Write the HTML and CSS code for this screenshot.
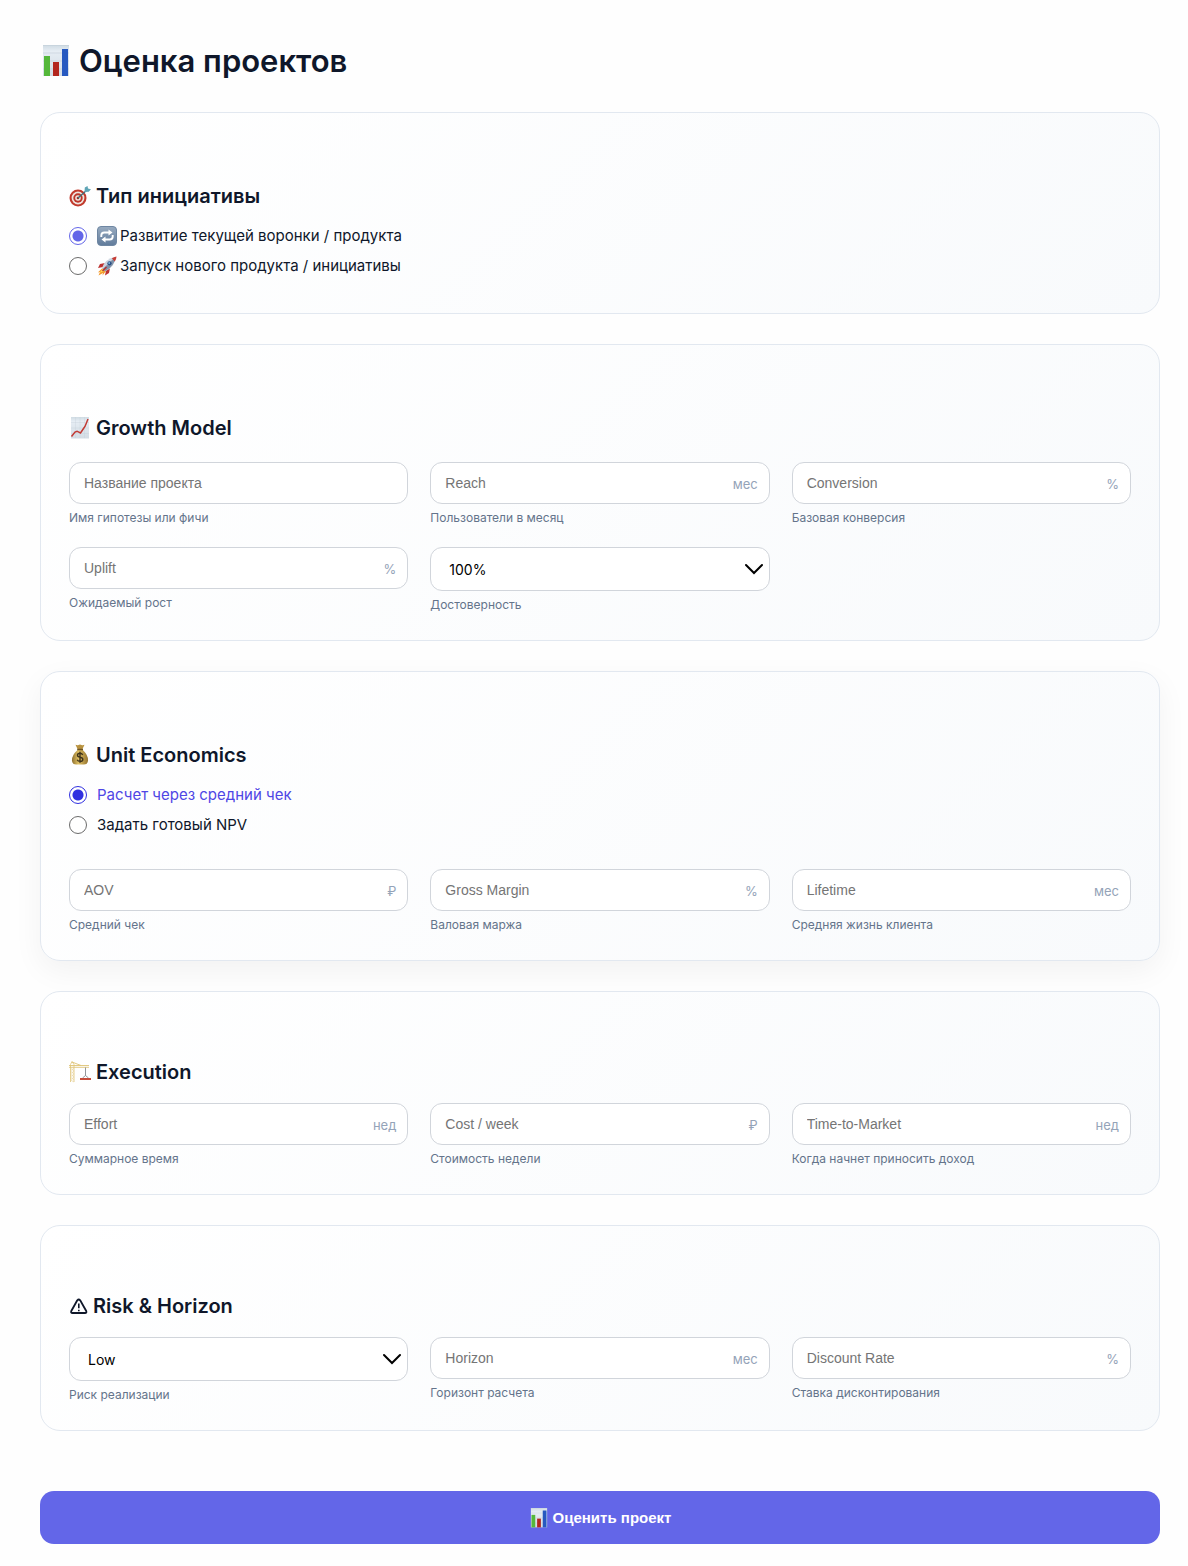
FILE: index.html
```html
<!DOCTYPE html>
<html lang="ru">
<head>
    <meta charset="UTF-8">
    <meta name="viewport" content="width=device-width, initial-scale=1.0">
    <title>Оценка проектов</title>
    <link rel="stylesheet" href="styles.css">
</head>
<body>
    <!-- общие иконки -->
    <svg class="sprite" aria-hidden="true">
        <defs>
            <linearGradient id="paper" x1="0" y1="0" x2="0" y2="1">
                <stop offset="0" stop-color="#cfdbe3"/>
                <stop offset="0.2" stop-color="#e6edf4"/>
                <stop offset="1" stop-color="#d3dce4"/>
            </linearGradient>
            <linearGradient id="key" x1="0" y1="0" x2="0" y2="1">
                <stop offset="0" stop-color="#98abc0"/>
                <stop offset="1" stop-color="#607b9b"/>
            </linearGradient>
            <linearGradient id="gold" x1="0" y1="0" x2="1" y2="0">
                <stop offset="0" stop-color="#8f7130"/>
                <stop offset="0.4" stop-color="#dfc063"/>
                <stop offset="1" stop-color="#95742f"/>
            </linearGradient>
        </defs>
        <symbol id="icon-chart" viewBox="0 0 32 32">
            <rect x="3" y="0" width="26" height="31" fill="url(#paper)"/>
            <path d="M3 .5h26M3 8h26M3 16h26M3 24h26" stroke="#c3ced8" stroke-width=".6"/>
            <rect x="4" y="11" width="6" height="20" fill="#55b83b"/>
            <rect x="13" y="17" width="6" height="14" fill="#b3261e"/>
            <rect x="22" y="4" width="6" height="27" fill="#2759c0"/>
        </symbol>
    </svg>

    <main class="container">
        <h1><svg class="icon-title" aria-hidden="true"><use href="#icon-chart"/></svg>Оценка проектов</h1>

        <form>
            <section class="card">
                <h2>
                    <svg class="icon" viewBox="0 0 22 22" aria-hidden="true">
                        <circle cx="9" cy="13" r="8.500" fill="#c13a2c"/>
                        <circle cx="9" cy="13" r="6.400" fill="#eee5df"/>
                        <circle cx="9" cy="13" r="4.700" fill="#bd3629"/>
                        <circle cx="9" cy="13" r="2.800" fill="#eee5df"/>
                        <circle cx="9" cy="13" r="1.300" fill="#a62d22"/>
                        <path d="M9 13 18 5" stroke="#3e6f7b" stroke-width="1.300"/>
                        <path d="m15.500 7 .3-4.500L18.500 1l.5 2.500 3 .7-2.300 2.600z" fill="#5fa5b6"/>
                    </svg>
                    Тип инициативы
                </h2>
                <div class="radio-group">
                    <label>
                        <input type="radio" name="type" checked>
                        <svg class="icon-small" viewBox="0 0 20 20" aria-hidden="true">
                            <rect x=".5" y=".5" width="19" height="19" rx="3.500" fill="url(#key)" stroke="#6e86a2"/>
                            <path d="M4.300 11V9.500Q4.300 6.500 7.300 6.500H12M15.700 9v1.500q0 3-3 3H8" fill="none" stroke="#fff" stroke-width="1.900"/>
                            <path d="m11.500 3.500 4 3-4 3zM8.500 10.500l-4 3 4 3z" fill="#fff"/>
                        </svg>
                        <span>Развитие текущей воронки / продукта</span>
                    </label>
                    <label>
                        <input type="radio" name="type">
                        <svg class="icon-small" viewBox="0 0 20 20" aria-hidden="true">
                            <path d="M5.500 12 .8 16.500 3 16l-1.500 3.500L6 17l-.5 2.500L9 15z" fill="#f49a2d"/>
                            <path d="m5.500 13-2.800 3.800L7.500 15z" fill="#fbdc58"/>
                            <path d="M8 7 3 8 1 12l5-1zM13 12l-1 5-4 2.500 1-5z" fill="#bd3230"/>
                            <path d="M5 12Q8 3 18.500.8q0 9.700-10.300 14.500z" fill="#cbd4df"/>
                            <path d="M8 15.300Q18 10 18.500.8L5.800 13z" fill="#7f91a8"/>
                            <path d="M14.800 2.200Q17 1 19.500.5q0 2.500-1.700 5z" fill="#c83d35"/>
                            <circle cx="12.500" cy="7.300" r="2.100" fill="#294f83"/>
                            <circle cx="12.200" cy="7" r="1" fill="#78b3dc"/>
                            <path d="m9.500 11-4 4" stroke="#b52f2e" stroke-width="1.500"/>
                        </svg>
                        <span>Запуск нового продукта / инициативы</span>
                    </label>
                </div>
            </section>

            <section class="card">
                <h2>
                    <svg class="icon" viewBox="0 0 22 22" aria-hidden="true">
                        <rect x="2" y="0" width="18" height="21.500" fill="url(#paper)"/>
                        <path d="M2 5.500h18M2 11h18M2 16.500h18M6.500 0v21M11 0v21M15.500 0v21" stroke="#c2ccd5" stroke-width=".3"/>
                        <path d="m2.500 19.500 3.500-4.500 2-.8 3.500 1.800 3-4.500 1.500-2 3-7.500" fill="none" stroke="#c23a34" stroke-width="1.500"/>
                    </svg>
                    Growth Model
                </h2>
                <div class="fields">
                    <div class="field">
                        <input type="text" id="name" placeholder="Название проекта">
                        <label for="name">Имя гипотезы или фичи</label>
                    </div>
                    <div class="field">
                        <input type="text" id="reach" placeholder="Reach">
                        <span class="unit">мес</span>
                        <label for="reach">Пользователи в месяц</label>
                    </div>
                    <div class="field">
                        <input type="text" id="conversion" placeholder="Conversion">
                        <span class="unit">%</span>
                        <label for="conversion">Базовая конверсия</label>
                    </div>
                    <div class="field">
                        <input type="text" id="uplift" placeholder="Uplift">
                        <span class="unit">%</span>
                        <label for="uplift">Ожидаемый рост</label>
                    </div>
                    <div class="field">
                        <select id="confidence">
                            <option>100%</option>
                            <option>80%</option>
                            <option>50%</option>
                        </select>
                        <svg class="arrow" viewBox="0 0 18 12" aria-hidden="true"><path d="m1 2 8 8 8-8"/></svg>
                        <label for="confidence">Достоверность</label>
                    </div>
                </div>
            </section>

            <section class="card active">
                <h2>
                    <svg class="icon" viewBox="0 0 22 22" aria-hidden="true">
                        <path d="M6.500.8q2 .8 3 .2 1.500-.8 3 0 1.500.5 3-.2L13.500 5h-5z" fill="#b8923f"/>
                        <path d="M8.500 6h5.300q5.700 5.500 5.200 11-.5 3.500-4 3.500H7q-3.500 0-4-3.500Q2.500 11.500 8.500 6z" fill="url(#gold)"/>
                        <path d="M8.200 5.500h5.800" stroke="#705423" stroke-width="1.500"/>
                        <path d="M13.700 10.800q-.8-1.500-2.700-1.500-2.500 0-2.500 2 0 1.500 2.600 2 2.700.5 2.700 2.100 0 2-2.700 2-2.200 0-2.900-1.700M11 7.800v11" fill="none" stroke="#3d321a" stroke-width="1.400"/>
                    </svg>
                    Unit Economics
                </h2>
                <div class="radio-group">
                    <label class="hovered">
                        <input type="radio" name="economics" checked>
                        <span>Расчет через средний чек</span>
                    </label>
                    <label>
                        <input type="radio" name="economics">
                        <span>Задать готовый NPV</span>
                    </label>
                </div>
                <div class="fields">
                    <div class="field">
                        <input type="text" id="aov" placeholder="AOV">
                        <span class="unit">₽</span>
                        <label for="aov">Средний чек</label>
                    </div>
                    <div class="field">
                        <input type="text" id="margin" placeholder="Gross Margin">
                        <span class="unit">%</span>
                        <label for="margin">Валовая маржа</label>
                    </div>
                    <div class="field">
                        <input type="text" id="lifetime" placeholder="Lifetime">
                        <span class="unit">мес</span>
                        <label for="lifetime">Средняя жизнь клиента</label>
                    </div>
                </div>
            </section>

            <section class="card compact">
                <h2>
                    <svg class="icon" viewBox="0 0 22 22" aria-hidden="true">
                        <path d="M1.500 21V3.500L3 .5l2 3V21" fill="none" stroke="#e6cf91"/>
                        <path d="m1.500 7 3.500 3-3.500 3L5 16l-3.500 3L5 21M5 7l-3.500 3L5 13l-3.500 3L5 19" fill="none" stroke="#ead7a2" stroke-width=".7"/>
                        <path d="M0 4.500h20M0 6.300h20M3 1l9 3.500" fill="none" stroke="#dfc477" stroke-width=".9"/>
                        <path d="M16.500 6.500v8m0 0-3 2.500m3-2.500 3 2.500" fill="none" stroke="#777c82" stroke-width=".8"/>
                        <path d="M11 17h11v2H11z" fill="#c64d3b"/>
                    </svg>
                    Execution
                </h2>
                <div class="fields">
                    <div class="field">
                        <input type="text" id="effort" placeholder="Effort">
                        <span class="unit">нед</span>
                        <label for="effort">Суммарное время</label>
                    </div>
                    <div class="field">
                        <input type="text" id="cost" placeholder="Cost / week">
                        <span class="unit">₽</span>
                        <label for="cost">Стоимость недели</label>
                    </div>
                    <div class="field">
                        <input type="text" id="ttm" placeholder="Time-to-Market">
                        <span class="unit">нед</span>
                        <label for="ttm">Когда начнет приносить доход</label>
                    </div>
                </div>
            </section>

            <section class="card compact">
                <h2>
                    <svg class="icon icon-warning" viewBox="0 0 19 22" aria-hidden="true">
                        <path d="M8.300 5.300 2.300 16q-.8 2 1.200 2h12.500q2 0 1.200-2l-6-10.700q-1.500-1.600-2.900 0z" fill="none" stroke="#0f172a" stroke-width="1.800"/>
                        <path d="M9.800 8.500v4.700m0 1.500v1.600" stroke="#0f172a" stroke-width="1.600"/>
                    </svg>
                    Risk &amp; Horizon
                </h2>
                <div class="fields">
                    <div class="field">
                        <select id="risk">
                            <option>Low</option>
                            <option>Medium</option>
                            <option>High</option>
                        </select>
                        <svg class="arrow" viewBox="0 0 18 12" aria-hidden="true"><path d="m1 2 8 8 8-8"/></svg>
                        <label for="risk">Риск реализации</label>
                    </div>
                    <div class="field">
                        <input type="text" id="horizon" placeholder="Horizon">
                        <span class="unit">мес</span>
                        <label for="horizon">Горизонт расчета</label>
                    </div>
                    <div class="field">
                        <input type="text" id="rate" placeholder="Discount Rate">
                        <span class="unit">%</span>
                        <label for="rate">Ставка дисконтирования</label>
                    </div>
                </div>
            </section>

            <button type="button"><svg class="icon-button" aria-hidden="true"><use href="#icon-chart"/></svg>Оценить проект</button>
        </form>
    </main>
</body>
</html>
```
FILE: styles.css
```css
* {
    box-sizing: border-box;
}
body {
    margin: 0;
    background: #fefefe;
    color: #0f172a;
    font-family: Inter, "Liberation Sans", sans-serif;
}
.sprite {
    position: absolute;
    width: 0;
    height: 0;
}
.container {
    padding: 40px 28px 22px 40px;
}
h1 {
    display: flex;
    align-items: center;
    gap: 7px;
    margin: 0 0 30px;
    font-size: 31px;
    font-weight: 600;
    line-height: 42px;
}
.icon-title {
    width: 32px;
    height: 32px;
}
form {
    display: flex;
    flex-direction: column;
    gap: 30px;
}
.card {
    padding: 68px 28px 28px;
    border: 1px solid #e2e8f0;
    border-radius: 20px;
    background: linear-gradient(135deg, #ffffff, #f8fafc);
}
.card.active {
    box-shadow: 0 10px 30px rgba(0, 0, 0, 0.05);
}
h2 {
    display: flex;
    align-items: center;
    gap: 5px;
    margin: 0 0 14px;
    font-size: 20px;
    font-weight: 600;
    line-height: 30px;
}
.compact h2 {
    line-height: 24px;
}
.icon {
    width: 22px;
    height: 22px;
}
.icon-warning {
    width: 19px;
}
.radio-group label {
    display: flex;
    align-items: center;
    width: fit-content;
    margin-bottom: 8px;
    font-size: 15px;
    line-height: 22px;
    cursor: pointer;
}
.radio-group .hovered {
    color: #4f46e5;
}
.icon-small {
    width: 20px;
    height: 20px;
    margin-right: 3px;
}
input[type="radio"] {
    appearance: none;
    width: 18px;
    height: 18px;
    margin: 0 10px 0 0;
    border: 1px solid #6b6b6b;
    border-radius: 50%;
    background: #fff;
}
input[type="radio"]:checked {
    border-color: #6366e8;
    background: radial-gradient(circle, #6366e8 5px, #fff 6px);
}
.hovered input[type="radio"]:checked {
    border-color: #3030e0;
    background: radial-gradient(circle, #3030e0 5px, #fff 6px);
}
.fields {
    display: grid;
    grid-template-columns: repeat(3, 1fr);
    gap: 22px;
    margin-top: 19px;
}
.radio-group + .fields {
    margin-top: 33px;
}
.field {
    position: relative;
}
.field input, .field select {
    display: block;
    width: 100%;
    height: 42px;
    padding: 0 14px;
    border: 1px solid #d1d5db;
    border-radius: 12px;
    background: #fff;
    color: #000;
    font-family: "Liberation Sans", Arial, sans-serif;
    font-size: 14px;
}
.field input::placeholder {
    color: #757575;
}
.field select {
    appearance: none;
    height: 44px;
    padding: 0 18px;
    font-family: Inter, sans-serif;
}
.field label {
    display: block;
    margin-top: 6px;
    color: #64748b;
    font-size: 12px;
    line-height: 15px;
}
.unit {
    position: absolute;
    top: 12px;
    right: 12px;
    color: #94a3b8;
    font-size: 13px;
    line-height: 20px;
    pointer-events: none;
}
.arrow {
    position: absolute;
    top: 16px;
    right: 7px;
    width: 18px;
    height: 12px;
    fill: none;
    stroke: #000;
    stroke-width: 2;
    stroke-linecap: round;
    pointer-events: none;
}
button {
    display: flex;
    align-items: center;
    justify-content: center;
    gap: 4px;
    height: 53px;
    margin-top: 30px;
    border: none;
    border-radius: 14px;
    background: #6366e8;
    color: #fff;
    font-family: "Liberation Sans", Arial, sans-serif;
    font-size: 15px;
    font-weight: 600;
    cursor: pointer;
}
.icon-button {
    width: 20px;
    height: 20px;
}
@media (max-width: 700px) {
    .fields {
        grid-template-columns: 1fr;
    }
}
```
